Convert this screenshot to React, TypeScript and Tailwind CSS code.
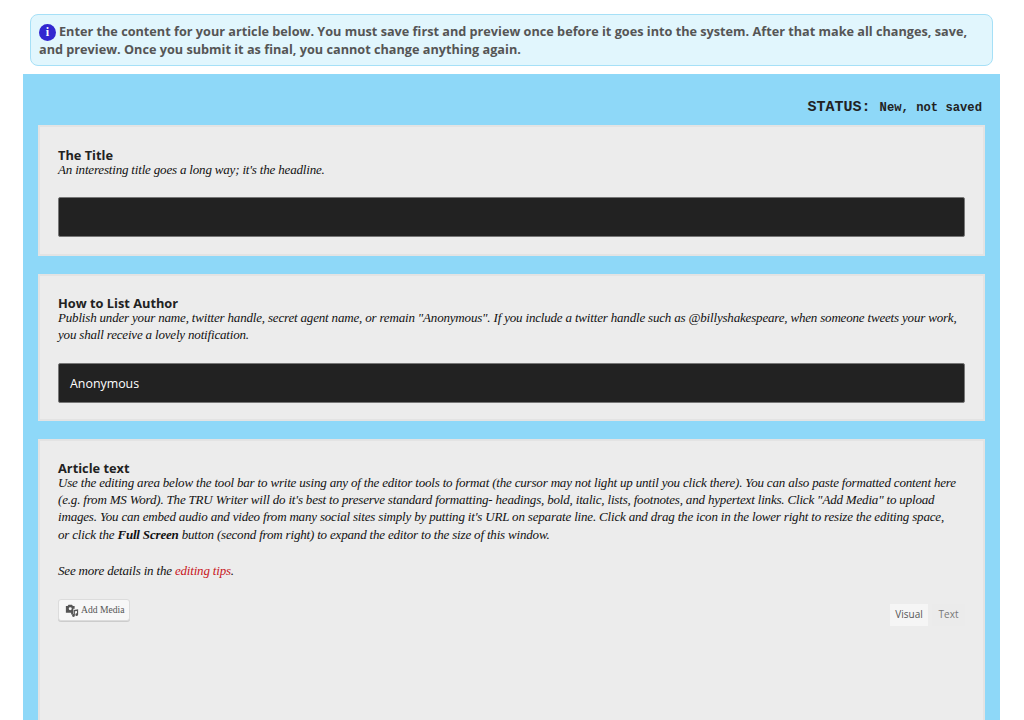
const sans = "font-['Open_Sans',sans-serif]";

const Card = ({ title, children, className }: { title: string; children: React.ReactNode; className: string }) => (
  <section className={`border-2 border-[#e3e3e3] bg-[#ececec] px-[18px] ${className}`}>
    <h2 className={`${sans} -mb-[1px] text-[12.8px] font-bold leading-[13px] text-[#222]`}>{title}</h2>
    <div className="font-['Liberation_Serif',serif] text-[13px] italic leading-[17.2px] tracking-[-0.18px] text-[#111]">{children}</div>
  </section>
);

const Field = ({ value, className }: { value?: string; className: string }) => (
  <div className={`flex h-[40px] items-center rounded-[2px] border border-[#777] bg-[#222] px-[11px] ${sans} text-[12.4px] not-italic tracking-normal text-white ${className}`}>
    {value}
  </div>
);

const MediaIcon = () => (
  <svg viewBox="0 0 16 16" className="h-[14px] w-[14px] text-[#555]" fill="currentColor">
    <path d="M1 3.5h2l1-1.5h4l1 1.5h2v3H9.5V13H7v-2H1z" />
    <circle cx="6" cy="6.6" r="1.7" fill="#f7f7f7" />
    <path d="M10 8l5-1v6.2a1.6 1.6 0 1 1-1.3-1.5V9L11.3 9.5v4.7A1.6 1.6 0 1 1 10 12.7z" />
  </svg>
);

export default function App() {
  return (
    <div className="h-[720px] overflow-hidden bg-white">
      <div className={`mx-[30px] mt-[14px] h-[52px] w-[963px] rounded-[8px] border border-[#a6e0f7] bg-[#e1f6fd] px-[8px] pt-[7px] ${sans} text-[12.7px] font-bold leading-[18px] text-[#555]`}>
        <span className="-my-[4px] mr-[3px] inline-flex h-[17px] w-[17px] items-center justify-center rounded-full bg-[#3227d0] align-baseline font-['Liberation_Serif',serif] text-[12px] leading-none text-white">
          i
        </span>
        Enter the content for your article below. You must save first and preview once before it goes into the system. After that make all changes, save, and preview. Once you submit it as final, you cannot change anything again.
      </div>

      <main className="ml-[23px] mt-[8px] h-[700px] w-[977px] bg-[#8ed8f8] px-[15px] pt-[26px]">
        <div className="mb-[9px] flex h-[16px] items-baseline justify-end gap-[9px] pr-[3px] font-['Liberation_Mono',monospace] font-bold leading-[16px] text-[#222]">
          <span className="text-[15px]">STATUS:</span>
          <span className="text-[12.2px]">New, not saved</span>
        </div>

        <Card title="The Title" className="h-[131px] pt-[22px]">
          <p>An interesting title goes a long way; it's the headline.</p>
          <Field className="mt-[19px]" />
        </Card>

        <Card title="How to List Author" className="mt-[18px] h-[147px] pt-[21px]">
          <p>
            Publish under your name, twitter handle, secret agent name, or remain "Anonymous". If you include a twitter handle such as @billyshakespeare, when someone tweets your work,
            <br />
            you shall receive a lovely notification.
          </p>
          <Field value="Anonymous" className="mt-[20px]" />
        </Card>

        <Card title="Article text" className="mt-[18px] h-[400px] pt-[21px]">
          <p>
            Use the editing area below the tool bar to write using any of the editor tools to format (the cursor may not light up until you click there). You can also paste formatted content here
            <br />
            (e.g. from MS Word). The TRU Writer will do it's best to preserve standard formatting- headings, bold, italic, lists, footnotes, and hypertext links. Click "Add Media" to upload
            <br />
            images. You can embed audio and video from many social sites simply by putting it's URL on separate line. Click and drag the icon in the lower right to resize the editing space,
            <br />
            or click the <b>Full Screen</b> button (second from right) to expand the editor to the size of this window.
          </p>
          <p className="mt-[19px]">
            See more details in the <span className="text-[#c8161d]">editing tips</span>.
          </p>
          <div className="mt-[20px] flex items-start justify-between tracking-normal">
            <button className="flex h-[22px] w-[72px] items-center gap-[2px] rounded-[3px] border border-[#dcdcdc] bg-[#f7f7f7] pl-[6px] font-['Liberation_Serif',serif] text-[9.6px] not-italic text-[#555] shadow-[0_1px_0_#ccc]">
              <MediaIcon />
              Add Media
            </button>
            <div className={`mt-[5px] flex gap-[4px] ${sans} text-[10px] not-italic`}>
              <span className="flex h-[22px] w-[38px] items-center justify-center bg-[#f5f5f5] text-[#555]">Visual</span>
              <span className="flex h-[22px] w-[33px] items-center justify-center bg-[#ebebeb] text-[#777]">Text</span>
            </div>
          </div>
        </Card>
      </main>
    </div>
  );
}
